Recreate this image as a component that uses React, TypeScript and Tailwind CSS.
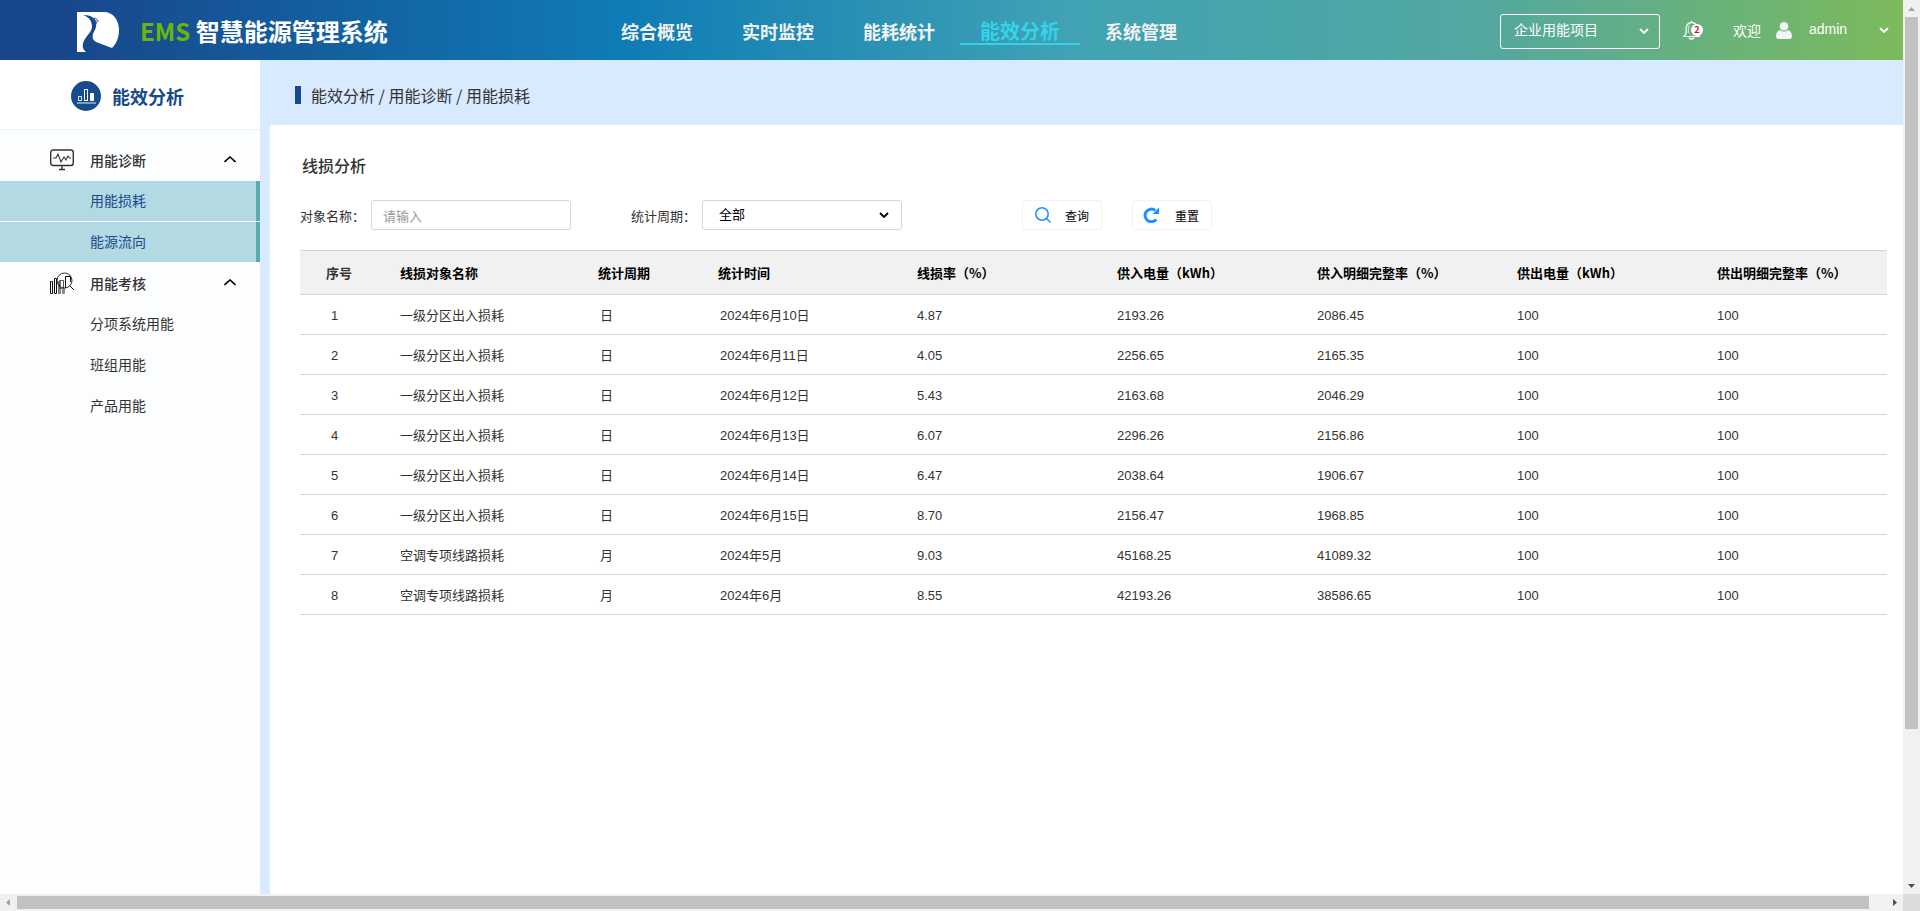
import { useState } from "react"

const navItems = ["综合概览", "实时监控", "能耗统计", "能效分析", "系统管理"]

const menuGroups = [
    { title: "用能诊断", icon: "monitor", items: ["用能损耗", "能源流向"], active: true },
    { title: "用能考核", icon: "search", items: ["分项系统用能", "班组用能", "产品用能"], active: false },
]

const columns = [
    { title: "线损对象名称", width: "w-[198px]" },
    { title: "统计周期", width: "w-[120px]" },
    { title: "统计时间", width: "w-[199px]" },
    { title: "线损率（%）", width: "w-[200px]" },
    { title: "供入电量（kWh）", width: "w-[200px]" },
    { title: "供入明细完整率（%）", width: "w-[200px]" },
    { title: "供出电量（kWh）", width: "w-[200px]" },
    { title: "供出明细完整率（%）", width: "" },
]

const rows = [
    ["一级分区出入损耗", "日", "2024年6月10日", "4.87", "2193.26", "2086.45", "100", "100"],
    ["一级分区出入损耗", "日", "2024年6月11日", "4.05", "2256.65", "2165.35", "100", "100"],
    ["一级分区出入损耗", "日", "2024年6月12日", "5.43", "2163.68", "2046.29", "100", "100"],
    ["一级分区出入损耗", "日", "2024年6月13日", "6.07", "2296.26", "2156.86", "100", "100"],
    ["一级分区出入损耗", "日", "2024年6月14日", "6.47", "2038.64", "1906.67", "100", "100"],
    ["一级分区出入损耗", "日", "2024年6月15日", "8.70", "2156.47", "1968.85", "100", "100"],
    ["空调专项线路损耗", "月", "2024年5月", "9.03", "45168.25", "41089.32", "100", "100"],
    ["空调专项线路损耗", "月", "2024年6月", "8.55", "42193.26", "38586.65", "100", "100"],
]

const Chevron = ({ className }: { className: string }) => (
    <svg className={className} viewBox="0 0 10 6" fill="none" stroke="currentColor" strokeWidth="1.8">
        <path d="M1 1l4 4 4-4" />
    </svg>
)

const Logo = () => (
    <svg className="w-[42px] h-10" viewBox="0 0 42 40">
        <path fill="#fff" d="M0 0h27C36 0 42 8 42 18c0 8-3 14-7 18L19 30c-3-2-4-4-3-8 1-3 4-6 3-12-1-3-3-5-6-6C11 3 8 3 6 3c6 2 9 6 9 12-1 7-8 10-9 17-1 3 0 5 3 8H0z" />
        <path fill="none" stroke="#18529a" strokeWidth="1" d="M15 6c3 1 5 3 4 6M17 6c2 0 4 2 4 4" />
    </svg>
)

const MonitorIcon = () => (
    <svg className="w-6 h-[22px]" viewBox="0 0 24 22" fill="none" stroke="#333">
        <rect x="0.7" y="1" width="22.6" height="15.5" rx="2.5" strokeWidth="1.4" />
        <path d="M3 9h3l2-4 3 8 3-5 2 3 2-4 1.500 2H21" strokeWidth="1.100" />
        <path d="M12 17v3M9 20.500h6" strokeWidth="1.400" />
    </svg>
)

const SearchChartIcon = () => (
    <svg className="w-6 h-[22px]" viewBox="0 0 24 22" fill="none" stroke="#111">
        <path d="M0.500 9.500h2v12h-2zM4.500 6.500h2v15h-2z" />
        <path d="M8.500 9.500h2v12h-2z" fill="#999" stroke="#777" />
        <path d="M9.500 8.500h4v8h-4z" stroke="#555" />
        <path d="M12.500 16.500h2v5h-2z" fill="#888" stroke="#888" />
        <path d="M15.500 16V4.500h5V10" />
        <circle cx="14.500" cy="8.500" r="7.500" strokeWidth="0.900" />
        <path d="M20 14l4 4" />
    </svg>
)

const BadgeIcon = () => (
    <svg className="size-[30px]" viewBox="0 0 30 30">
        <circle cx="15" cy="15" r="15" fill="#184a8e" />
        <g fill="none" stroke="#fff">
            <rect x="7.500" y="15.500" width="3" height="4" strokeOpacity="0.800" />
            <rect x="13.500" y="8.500" width="3" height="11" />
        </g>
        <rect x="19" y="12" width="4" height="8" rx="1" fill="#fff" />
        <path d="M6 22h19" stroke="#a3b7d2" strokeWidth="1.500" />
    </svg>
)

const BellIcon = () => (
    <svg className="w-5 h-5" viewBox="0 0 20 20" fill="none" stroke="#fff">
        <path d="M8.500 0.800v1.500C4.500 3 3 6 3 9v4.500L0.800 16.500h15.500L14.500 13.500V9c0-3-1.500-6-6-6.700" strokeWidth="1.200" />
        <path d="M5.300 13V9c0-2 .7-3.300 1.700-4" strokeWidth="0.800" />
        <path d="M6 17.500c.5 2 4.500 2 5 0" strokeWidth="1.300" />
    </svg>
)

const UserIcon = () => (
    <svg className="w-4 h-[17px]" viewBox="0 0 16 17" fill="#f3f5fa">
        <circle cx="8" cy="4.300" r="4.300" />
        <path d="M4 8c1.200 1.200 2.500 1.500 4 1.500S10.800 9.200 12 8c2.500.8 4 3 4 6 0 2-1 3-2.500 3h-11C1 17 0 16 0 14c0-3 1.500-5.200 4-6z" />
    </svg>
)

const QueryIcon = () => (
    <svg className="size-4" viewBox="0 0 16 16" fill="none" stroke="#1890ff" strokeWidth="1.500">
        <circle cx="7" cy="7" r="6.200" />
        <path d="M11.500 11.500l4 4" />
    </svg>
)

const ResetIcon = () => (
    <svg className="size-4" viewBox="0 0 16 16">
        <path d="M13.200 12.500A6.300 6.300 0 1 1 12.200 3.400" fill="none" stroke="#1890ff" strokeWidth="3" />
        <path d="M16 .5V7H9.500z" fill="#1890ff" />
    </svg>
)

const Arrow = ({ d, color }: { d: string; color: string }) => (
    <svg className="size-[17px] shrink-0" viewBox="0 0 17 17" fill={color}>
        <path d={d} />
    </svg>
)

const Header = () => (
    <header className="h-[60px] flex items-center shrink-0 text-white bg-[linear-gradient(90deg,#18468b_0%,#18468b_3%,#0f7cb5_33%,#40a2b4_56%,#53a8a0_78%,#7cba5b_100%)]">
        <div className="w-[597px] pl-[77px] flex items-center shrink-0">
            <div className="pt-1"><Logo /></div>
            <h1 className="pl-[21px] pt-0.5 text-2xl font-bold whitespace-nowrap"><span className="text-[#6cb60a]">EMS</span> 智慧能源管理系统</h1>
        </div>
        <nav className="flex gap-px shrink-0 pt-0.5">
            {navItems.map((item) => (
                <a key={item} href="#" className={item === "能效分析"
                    ? "w-[120px] h-7 text-center text-xl leading-[28px] font-bold text-[#33d3ea] border-b-2 border-[#33d3ea]"
                    : "w-[120px] h-7 text-center text-lg leading-[28px] font-bold text-[#f2f2f2]"}>{item}</a>
            ))}
        </nav>
        <div className="ml-auto flex items-center pr-[14px]">
            <div className="relative pt-0.5">
                <select aria-label="项目" className="appearance-none w-[160px] h-[35px] pl-[13px] pb-1 border border-white rounded-[3px] text-sm text-white bg-transparent">
                    <option>企业用能项目</option>
                </select>
                <Chevron className="absolute right-[11px] top-4 w-[10px] h-[6px] pointer-events-none" />
            </div>
            <button aria-label="消息" className="relative ml-[23px]">
                <BellIcon />
                <span className="absolute left-2 top-1 size-3 rounded-full bg-white text-[#e0002d] text-[9px] leading-3 font-bold text-center">2</span>
            </button>
            <span className="ml-[30px] mr-[15px] text-sm">欢迎</span>
            <UserIcon />
            <button className="ml-[17px] w-20 flex items-center justify-between text-sm font-[Liberation_Sans]">
                <span className="pb-0.5">admin</span>
                <Chevron className="w-[10px] h-[6px]" />
            </button>
        </div>
    </header>
)

const Sidebar = () => (
    <aside className="w-[260px] shrink-0 bg-[#fcfdff] text-sm text-[#333]">
        <div className="h-[70px] pl-[71px] pt-0.5 flex items-center gap-[11px] bg-white border-b border-[#e9eef4]">
            <BadgeIcon />
            <h2 className="text-lg font-bold text-[#184a8c]">能效分析</h2>
        </div>
        <div className="pt-[10px] flex flex-col gap-px">
            {menuGroups.map((group) => (
                <div key={group.title} className="flex flex-col gap-px">
                    <button className="h-10 pl-[50px] pr-6 pb-px flex items-center text-left font-medium">
                        {group.icon === "monitor" ? <MonitorIcon /> : <SearchChartIcon />}
                        <span className="ml-4 grow">{group.title}</span>
                        <svg className="w-3 h-[7px] text-black" viewBox="0 0 12 7" fill="none" stroke="currentColor" strokeWidth="1.6">
                            <path d="M.5 6L6 1l5.500 5" />
                        </svg>
                    </button>
                    {group.items.map((item) => (
                        <a key={item} href="#" className={group.active
                            ? "h-10 pl-[90px] leading-[38px] bg-[#b3d9e3] text-[#184a8c] border-r-4 border-[#5caaae]"
                            : "h-10 pl-[90px] leading-[38px]"}>{item}</a>
                    ))}
                </div>
            ))}
        </div>
    </aside>
)

const Filters = () => {
    const [name, setName] = useState("")

    return (
        <form className="mt-[23px] flex items-center text-[13px] text-[#333]">
            <label htmlFor="objName" className="w-[71px] pt-0.5">对象名称：</label>
            <input id="objName" value={name} onChange={(e) => setName(e.target.value)} placeholder="请输入" className="w-[200px] h-[30px] px-[11px] border border-[#d7d7d7] rounded-[3px] placeholder:text-[#999]" />
            <label htmlFor="period" className="ml-[60px] w-[71px] pt-0.5">统计周期：</label>
            <div className="relative">
                <select id="period" className="appearance-none w-[200px] h-[30px] px-4 pb-0.5 border border-[#d7d7d7] rounded-[3px] text-black">
                    <option>全部</option>
                </select>
                <Chevron className="absolute right-[13px] top-3 w-[10px] h-[6px] text-black pointer-events-none" />
            </div>
            <button type="button" className="ml-[120px] w-20 h-[30px] px-3 flex items-center justify-between border border-[#f2f2f2] rounded-[3px] text-xs text-black">
                <QueryIcon /><span className="pt-0.5">查询</span>
            </button>
            <button type="reset" onClick={() => setName("")} className="ml-[30px] w-20 h-[30px] pl-[10px] pr-3 flex items-center justify-between border border-[#f2f2f2] rounded-[3px] text-xs text-black">
                <ResetIcon /><span className="pt-0.5">重置</span>
            </button>
        </form>
    )
}

const LossTable = () => (
    <table className="mt-5 w-full table-fixed border-collapse text-[13px] text-[#333]">
        <thead>
            <tr className="h-11 bg-[#f1f1f1] border-y border-[#d4d4d4] text-left text-black">
                <th className="w-[100px] pl-[26px] font-bold text-[#333]">序号</th>
                {columns.map((col) => (
                    <th key={col.title} className={`${col.width} font-bold`}>{col.title}</th>
                ))}
            </tr>
        </thead>
        <tbody className="font-['Liberation_Sans','Noto_Sans_CJK_SC',sans-serif]">
            {rows.map((row, i) => (
                <tr key={i} className="h-10 border-b border-[#d4d4d4]">
                    <td className="pl-[31px] pt-0.5">{i + 1}</td>
                    {row.map((cell, j) => (
                        <td key={j} className={j === 1 || j === 2 ? "pl-0.5 pt-0.5" : "pt-0.5"}>{cell}</td>
                    ))}
                </tr>
            ))}
        </tbody>
    </table>
)

export default function App() {
    return (
        <div className="h-screen grid grid-cols-[minmax(0,1fr)_17px] grid-rows-[minmax(0,1fr)_17px] font-['Noto_Sans_CJK_SC',sans-serif]">
            <div className="flex flex-col overflow-hidden">
                <Header />
                <div className="flex grow bg-[#d8eaff]">
                    <Sidebar />
                    <div className="grow min-w-0 pl-[10px] flex flex-col">
                        <div className="h-[65px] pl-[25px] pt-1 flex items-center gap-[10px] text-base text-[#333]">
                            <span className="w-1.5 h-[18px] bg-[#184a8e]" />
                            <p>能效分析 / 用能诊断 / 用能损耗</p>
                        </div>
                        <main className="grow bg-white pl-[30px] pr-4 pt-7">
                            <h3 className="pl-0.5 text-base font-medium text-[#333]">线损分析</h3>
                            <Filters />
                            <LossTable />
                        </main>
                    </div>
                </div>
            </div>
            {/* page scroll bars */}
            <div className="flex flex-col bg-[#f1f1f1]">
                <Arrow d="M5 11h7L8.500 7z" color="#a3a3a3" />
                <div className="grow px-0.5"><div className="h-[82.8%] bg-[#c1c1c1]" /></div>
                <Arrow d="M5 7h7l-3.500 4z" color="#505050" />
            </div>
            <div className="flex bg-[#f1f1f1]">
                <Arrow d="M10 5v7L6 8.500z" color="#a3a3a3" />
                <div className="grow py-0.5"><div className="w-[99.1%] h-full bg-[#c1c1c1]" /></div>
                <Arrow d="M7 5v7l4-3.500z" color="#505050" />
            </div>
            <div className="bg-[#dcdcdc]" />
        </div>
    )
}
